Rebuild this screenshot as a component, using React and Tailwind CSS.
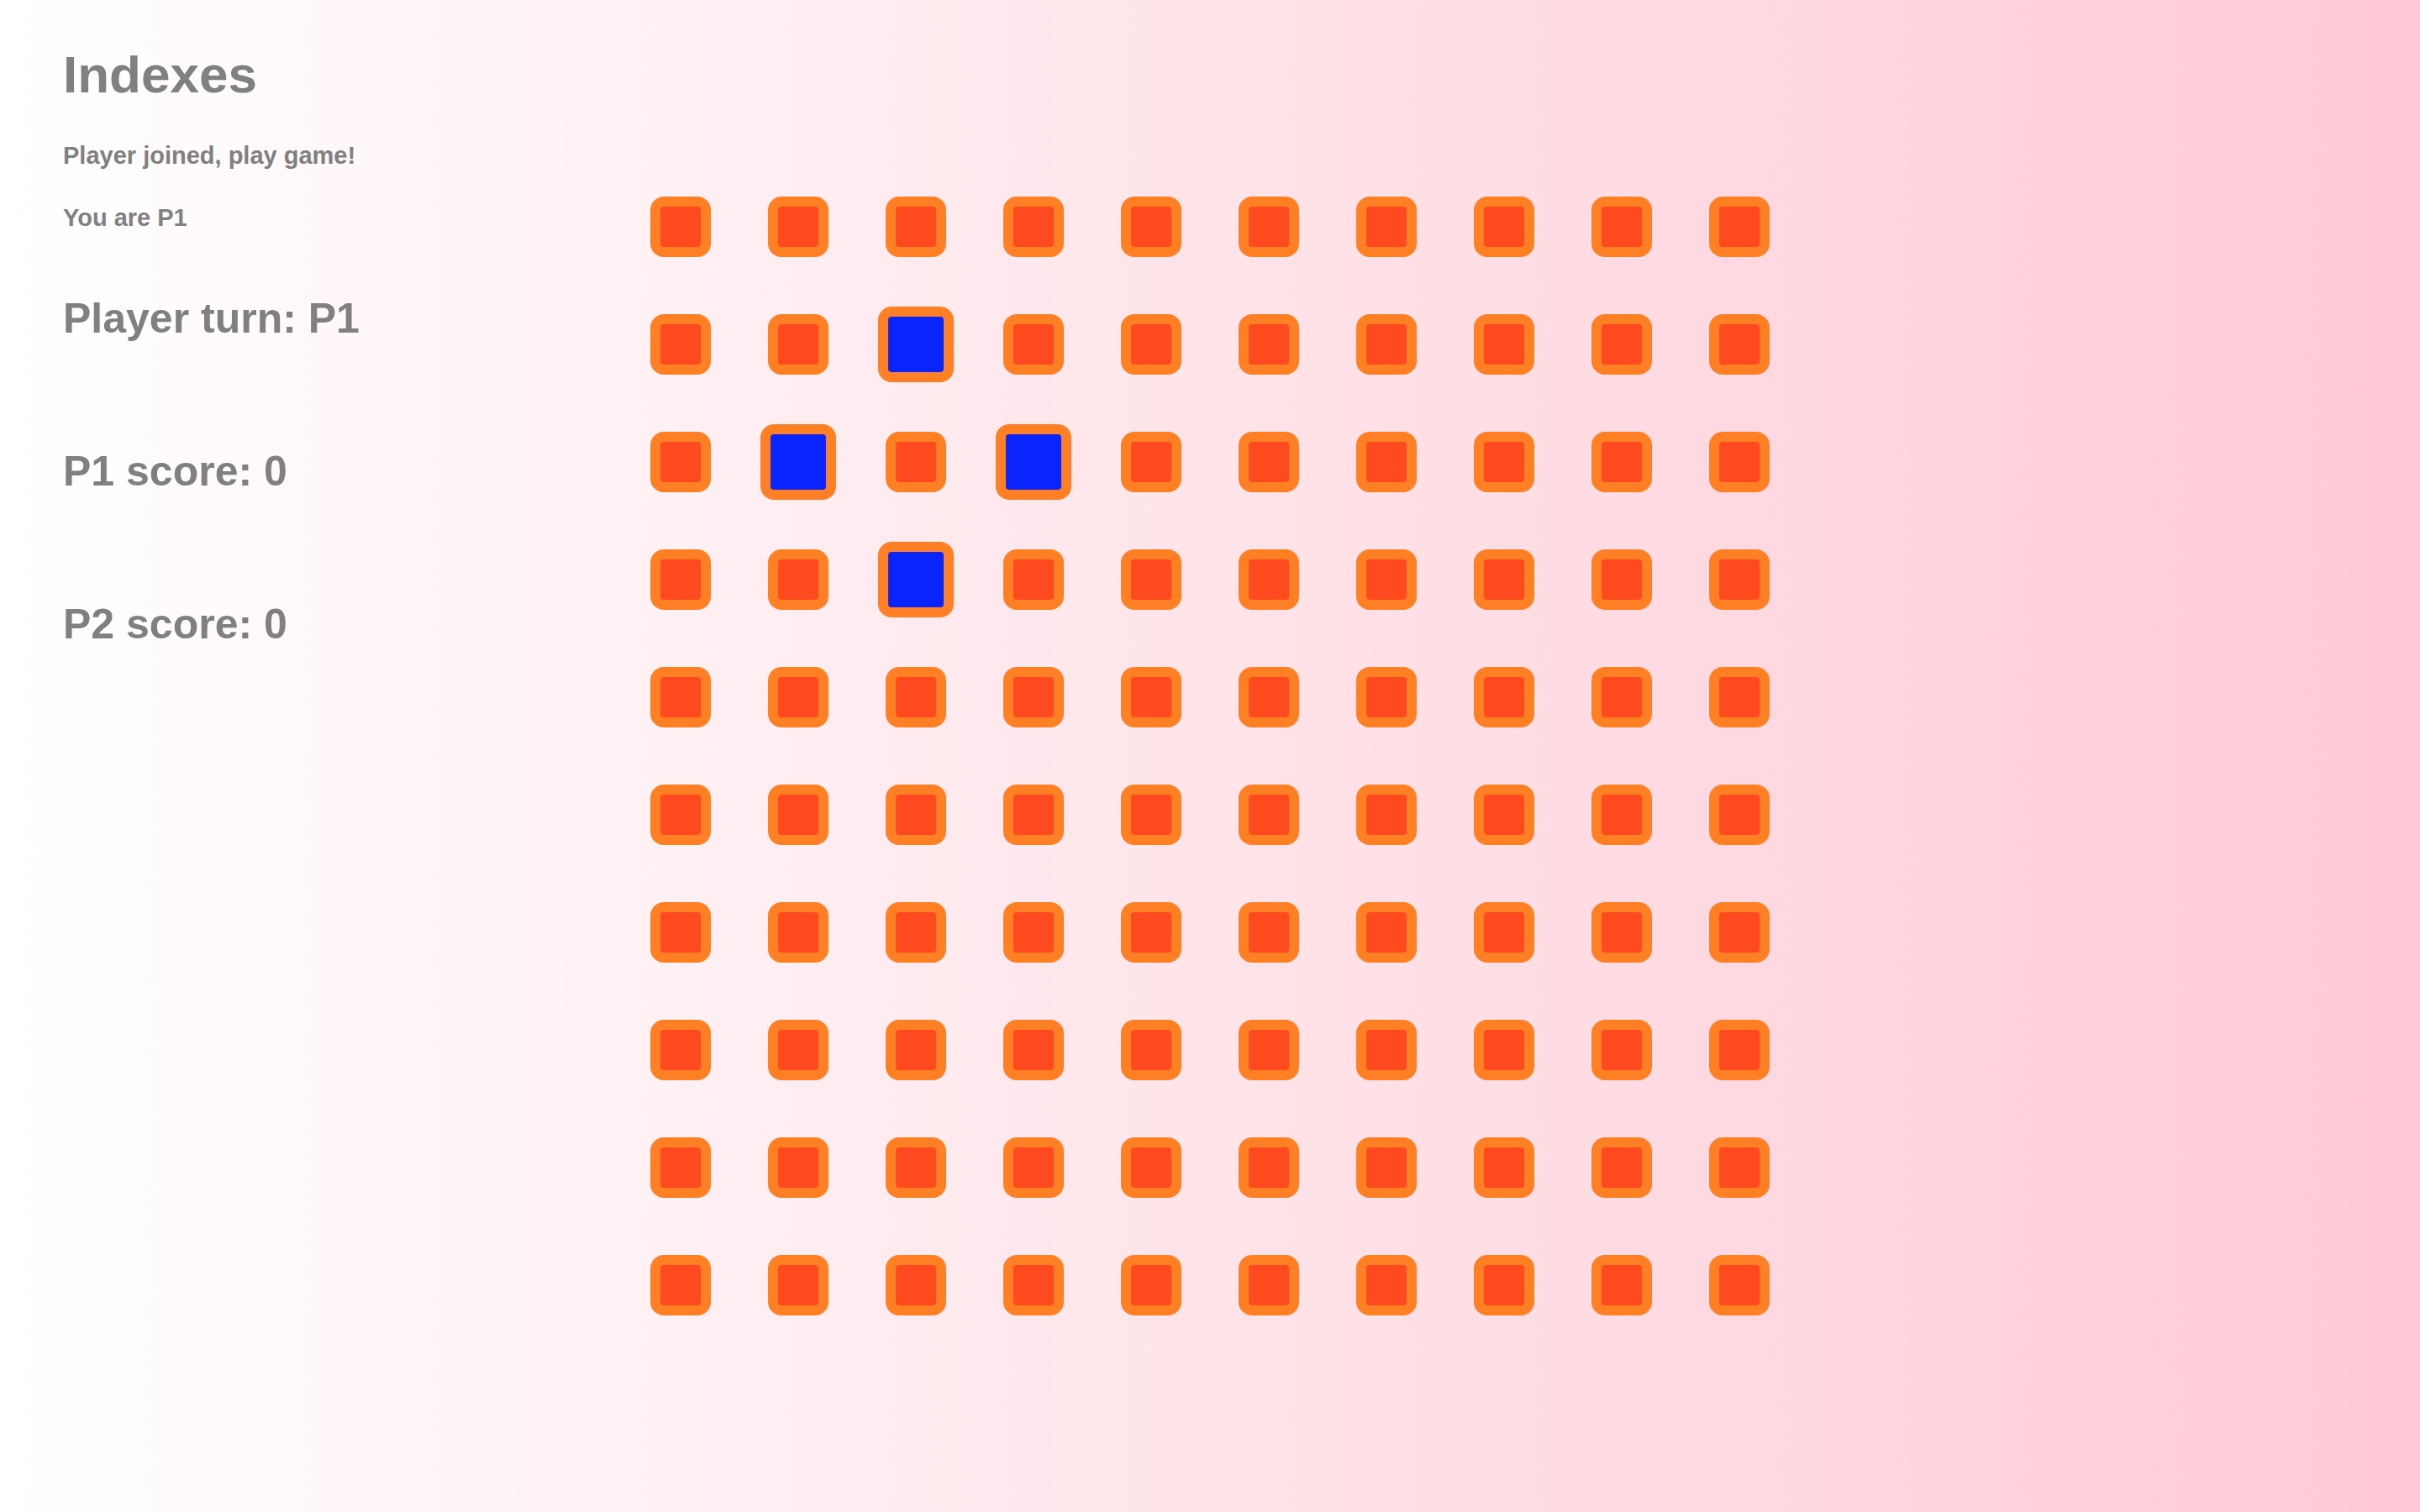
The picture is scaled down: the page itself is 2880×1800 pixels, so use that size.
import React from "react";

const SIZE = 10;
const picked = new Set(["1-2", "2-1", "2-3", "3-2"]);

const Cell = ({ active }) => {
    if (active) {
        return (
            <div className="w-[90px] h-[90px] shrink-0 rounded-2xl border-[12px] border-[#ff8024] bg-[#0a24ff]" />
        );
    }
    return (
        <div className="w-[72px] h-[72px] shrink-0 rounded-2xl border-[12px] border-[#ff8024] bg-[#ff4a1f]" />
    );
};

const App = () => {
    const rows = [];
    for (let r = 0; r < SIZE; r++) {
        for (let c = 0; c < SIZE; c++) {
            rows.push(
                <div key={`${r}-${c}`} className="w-[72px] h-[72px] flex items-center justify-center">
                    <Cell active={picked.has(`${r}-${c}`)} />
                </div>
            );
        }
    }

    return (
        <div className="min-h-screen w-full flex bg-linear-to-r from-white to-[#ffc9d5] text-[#808080] font-['Liberation_Sans',Arial,sans-serif]">
            <div className="w-[774px] shrink-0 pl-[75px] pt-[58px] flex flex-col">
                <h1 className="text-[62px] leading-none font-bold">Indexes</h1>
                <p className="mt-[51px] text-[29px] leading-none font-bold">Player joined, play game!</p>
                <p className="mt-[45px] text-[29px] leading-none font-bold">You are P1</p>
                <h2 className="mt-[80px] text-[50px] leading-none font-bold">Player turn: P1</h2>
                <h2 className="mt-[132px] text-[50px] leading-none font-bold">P1 score: 0</h2>
                <h2 className="mt-[132px] text-[50px] leading-none font-bold">P2 score: 0</h2>
            </div>
            <div className="mt-[234px] grid grid-cols-[repeat(10,72px)] gap-[68px] self-start">
                {rows}
            </div>
        </div>
    );
};

export default App;
